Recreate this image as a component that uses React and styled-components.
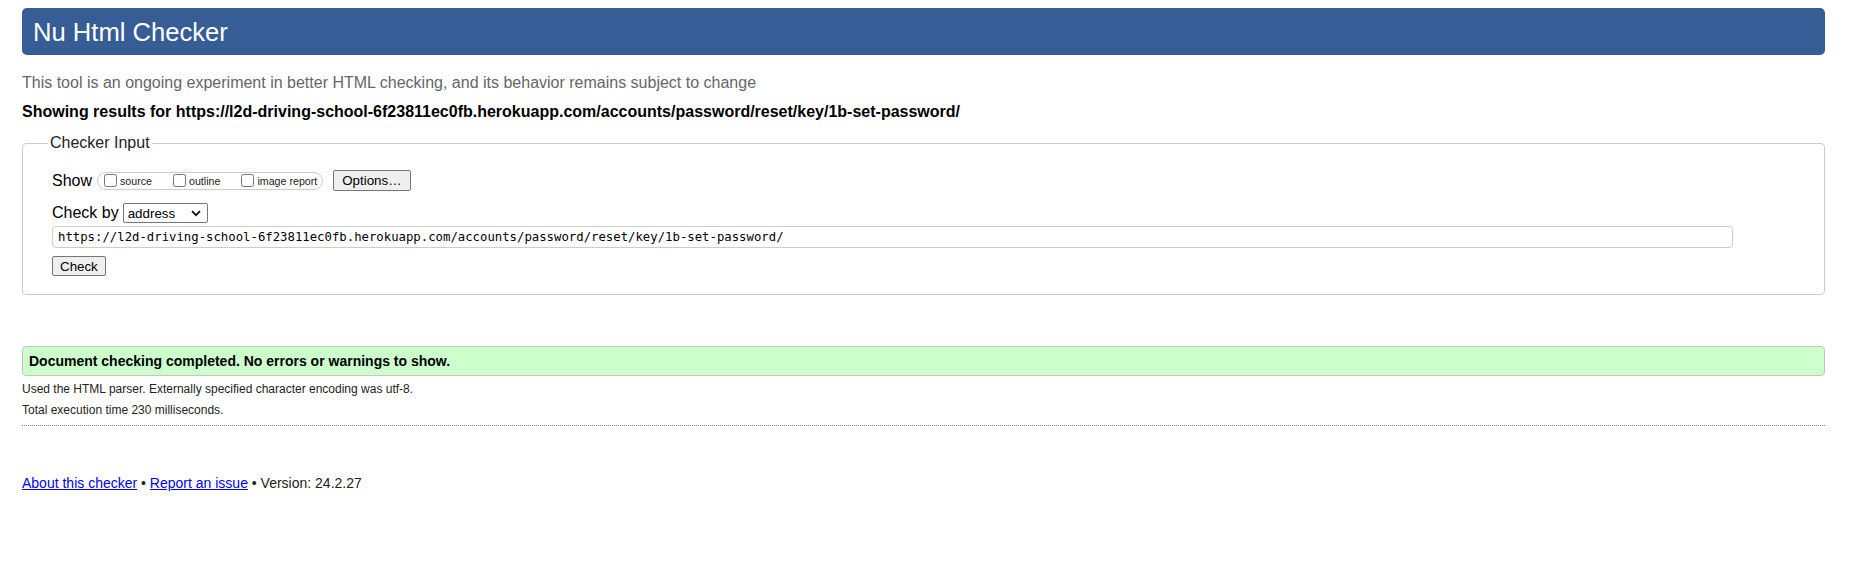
import React from 'react';
import styled, { createGlobalStyle } from 'styled-components';

const Global = createGlobalStyle`
  html, body { margin: 0; padding: 0; background: #fff; }
  body { font-family: "Liberation Sans", Arial, sans-serif; color: #000; }
`;

const Page = styled.div`
  padding: 8px 26px 40px 22px;
`;

const Banner = styled.h1`
  margin: 0;
  height: 47px;
  box-sizing: border-box;
  padding: 2px 11px 0;
  display: flex;
  align-items: center;
  background: #365d95;
  color: #fff;
  font-size: 25.6px;
  font-weight: normal;
  border-radius: 5px;
`;

const Intro = styled.p`
  margin: 19px 0 0;
  font-size: 16px;
  line-height: 18px;
  color: #666;
`;

const Showing = styled.p`
  margin: 11px 0 0;
  font-size: 16px;
  line-height: 18px;
  font-weight: bold;
`;

const Fieldset = styled.fieldset`
  margin: 13px 0 0;
  padding: 18px 12px 18px 29px;
  border: 1px solid #ccc;
  border-radius: 4px;
  min-width: 0;
`;

const Legend = styled.legend`
  margin-left: -4px;
  padding: 0 2px;
  font-size: 16px;
  line-height: 18px;
  color: #222;
`;

const Row = styled.div`
  display: flex;
  align-items: center;
  height: ${(p) => p.$h}px;
  margin-top: ${(p) => p.$mt || 0}px;
  font-size: 16px;
`;

const Group = styled.span`
  display: inline-flex;
  align-items: center;
  height: 18px;
  box-sizing: border-box;
  margin-left: 5px;
  padding: 0 5px 0 2px;
  border: 1px solid #ccc;
  border-radius: 9px;
`;

const Opt = styled.label`
  display: inline-flex;
  align-items: center;
  font-size: 10.67px;
  color: #222;
  margin-right: ${(p) => (p.$last ? 0 : 17)}px;
`;

const Box = styled.input`
  width: 13px;
  height: 13px;
  margin: 0 3px 0 4px;
`;

const Btn = styled.button`
  font-family: "Liberation Sans", Arial, sans-serif;
  font-size: 13.33px;
  height: ${(p) => p.$h}px;
  padding: 0 ${(p) => p.$px}px;
  margin-left: ${(p) => p.$ml || 0}px;
  background: #efefef;
  color: #000;
  border: 1px solid #767676;
  border-radius: 2px;
`;

const SelectWrap = styled.span`
  position: relative;
  display: inline-block;
  margin-left: 4px;
`;

const Select = styled.select`
  appearance: none;
  -webkit-appearance: none;
  width: 85px;
  height: 20px;
  box-sizing: border-box;
  padding: 0 0 0 4px;
  font-family: "Liberation Sans", Arial, sans-serif;
  font-size: 13.33px;
  color: #000;
  background: #fff;
  border: 1px solid #767676;
  border-radius: 2px;
`;

const Chevron = styled.svg`
  position: absolute;
  right: 7px;
  top: 7px;
  pointer-events: none;
`;

const UrlInput = styled.input`
  display: block;
  width: 1681px;
  height: 22px;
  box-sizing: border-box;
  margin-top: 3px;
  padding: 0 5px;
  font-family: "DejaVu Sans Mono", "Liberation Mono", monospace;
  font-size: 12.3px;
  color: #000;
  border: 1px solid #ccc;
  border-radius: 4px;
`;

const CheckRow = styled.div`
  margin-top: 8px;
  display: flex;
`;

const Success = styled.div`
  margin-top: 51px;
  height: 30px;
  box-sizing: border-box;
  display: flex;
  align-items: center;
  padding: 0 6px;
  background: #ccffcc;
  border: 1px solid #c4c4c4;
  border-radius: 4px;
  font-size: 14px;
  font-weight: bold;
`;

const Note = styled.p`
  margin: ${(p) => p.$mt}px 0 0;
  font-size: 12px;
  line-height: 14px;
  color: #222;
`;

const Rule = styled.hr`
  margin: 8px 0 0;
  border: 0;
  border-top: 1px dotted #888;
  height: 0;
`;

const Footer = styled.p`
  margin: 49px 0 0;
  font-size: 14px;
  line-height: 16px;
  color: #222;
`;

const Link = styled.a`
  color: #0000ee;
  text-decoration: underline;
`;

const URL =
  'https://l2d-driving-school-6f23811ec0fb.herokuapp.com/accounts/password/reset/key/1b-set-password/';

export default function App() {
  return (
    <>
      <Global />
      <Page>
        <Banner>Nu Html Checker</Banner>
        <Intro>
          This tool is an ongoing experiment in better HTML checking, and its behavior remains subject to change
        </Intro>
        <Showing>Showing results for {URL}</Showing>
        <Fieldset>
          <Legend>Checker Input</Legend>
          <Row $h={21}>
            Show
            <Group>
              <Opt>
                <Box type="checkbox" />
                source
              </Opt>
              <Opt>
                <Box type="checkbox" />
                outline
              </Opt>
              <Opt $last>
                <Box type="checkbox" />
                image report
              </Opt>
            </Group>
            <Btn type="button" $h={21} $px={8} $ml={10}>
              Options…
            </Btn>
          </Row>
          <Row $h={20} $mt={12}>
            Check by
            <SelectWrap>
              <Select defaultValue="address">
                <option value="address">address</option>
                <option value="file">file upload</option>
                <option value="text">text input</option>
              </Select>
              <Chevron width="10" height="7" viewBox="0 0 10 7">
                <path d="M1 1.2 L5 5.2 L9 1.2" fill="none" stroke="#111" strokeWidth="1.8" />
              </Chevron>
            </SelectWrap>
          </Row>
          <UrlInput type="url" defaultValue={URL} />
          <CheckRow>
            <Btn type="button" $h={20} $px={7}>
              Check
            </Btn>
          </CheckRow>
        </Fieldset>
        <Success>Document checking completed. No errors or warnings to show.</Success>
        <Note $mt={6}>Used the HTML parser. Externally specified character encoding was utf-8.</Note>
        <Note $mt={7}>Total execution time 230 milliseconds.</Note>
        <Rule />
        <Footer>
          <Link href="#about">About this checker</Link> • <Link href="#issue">Report an issue</Link> •
          Version: 24.2.27
        </Footer>
      </Page>
    </>
  );
}
